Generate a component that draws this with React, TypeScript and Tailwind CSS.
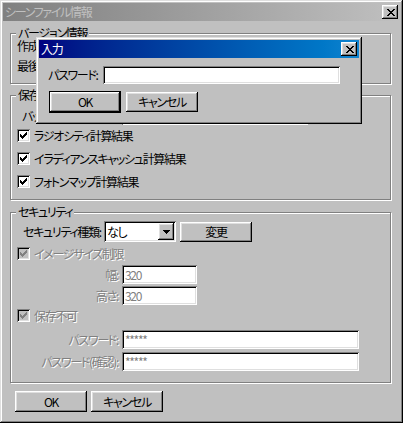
import React from "react";

const raised = "shadow-[inset_-1px_-1px_#000,inset_1px_1px_#fff,inset_-2px_-2px_#808080,inset_2px_2px_#dfdfdf]";
const sunken = "shadow-[inset_1px_1px_#808080,inset_-1px_-1px_#fff,inset_2px_2px_#000,inset_-2px_-2px_#dfdfdf]";
const frame = "shadow-[inset_-1px_-1px_#000,inset_1px_1px_#dfdfdf,inset_-2px_-2px_#808080,inset_2px_2px_#fff]";
const etched = "border border-[#808080] shadow-[inset_1px_1px_#fff,1px_1px_#fff]";
const grayed = "text-[#808080] [text-shadow:1px_1px_0_#fff]";

const CloseBtn = () => (
  <div className={`w-[16px] h-[14px] bg-[#c0c0c0] flex items-center justify-center pl-[1px] ${raised}`}>
    <svg width="8" height="7" viewBox="0 0 8 7" shapeRendering="crispEdges">
      <path
        d="M0 0h2v1H0zM6 0h2v1H6zM1 1h2v1H1zM5 1h2v1H5zM2 2h4v1H2zM3 3h2v1H3zM2 4h4v1H2zM1 5h2v1H1zM5 5h2v1H5zM0 6h2v1H0zM6 6h2v1H6z"
        fill="#000"
      />
    </svg>
  </div>
);

const Check = ({ label, disabled = false }: { label: string; disabled?: boolean }) => (
  <div className="flex items-center h-[13px] ml-[6px] gap-[4px]">
    <div className={`w-[13px] h-[13px] flex items-center justify-center ${sunken} ${disabled ? "bg-[#c0c0c0]" : "bg-white"}`}>
      <svg width="7" height="7" viewBox="0 0 7 7" shapeRendering="crispEdges">
        <path
          d="M6 0h1v1H6zM5 1h2v1H5zM0 2h1v1H0zM4 2h3v1H4zM0 3h2v1H0zM3 3h3v1H3zM0 4h5v1H0zM1 5h3v1H1zM2 6h1v1H2z"
          fill={disabled ? "#808080" : "#000"}
        />
      </svg>
    </div>
    <span className={`whitespace-nowrap ${disabled ? grayed : ""}`}>{label}</span>
  </div>
);

const Btn = ({ children, def = false, h = "h-[21px]" }: { children: React.ReactNode; def?: boolean; h?: string }) => (
  <div
    className={`w-[72px] ${h} bg-[#c0c0c0] flex items-center justify-center ${raised} ${def ? "border border-black" : ""}`}
  >
    {children}
  </div>
);

const Field = ({ label, w, value }: { label: string; w: string; value: string }) => (
  <div className="flex items-center h-[19px]">
    <span className={`w-[111px] pr-[4px] text-right whitespace-nowrap ${grayed}`}>{label}</span>
    <div className={`${w} h-[19px] bg-white flex items-center pl-[3px] text-[#808080] ${sunken}`}>{value}</div>
  </div>
);

export default function App() {
  return (
    <div
      className={`relative w-[403px] h-[423px] bg-[#c0c0c0] p-[3px] ${frame} font-['Noto_Sans_CJK_JP',sans-serif] text-[12px] leading-[12px] tracking-[-1.3px] text-black [font-feature-settings:'palt']`}
    >
      <div className="h-[18px] flex items-center justify-between pl-[2px] pr-[2px] bg-linear-to-r from-[#808080] to-[#c0c0c0]">
        <span className="text-[#c0c0c0]">シーンファイル情報</span>
        <CloseBtn />
      </div>

      {/* version info */}
      <fieldset className={`ml-[7px] mt-[6px] w-[381px] h-[57px] ${etched}`}>
        <legend className="ml-[5px] px-[2px] bg-[#c0c0c0] leading-[12px]">バージョン情報</legend>
        <div className="pl-[6px] pt-[1px] flex flex-col gap-[8px]">
          <div>作成バージョン: 4.2.0</div>
          <div>最後に保存したバージョン: 4.2.0</div>
        </div>
      </fieldset>

      {/* save */}
      <fieldset className={`ml-[7px] mt-[5px] w-[381px] h-[111px] ${etched}`}>
        <legend className="ml-[5px] px-[2px] bg-[#c0c0c0] leading-[12px]">保存内容</legend>
        <div className="mt-[5px] flex items-center h-[19px]">
          <span className="pl-[11px] w-[111px]">バックアップ:</span>
          <div className={`w-[186px] h-[19px] bg-white ${sunken}`} />
        </div>
        <div className="mt-[4px] flex flex-col gap-[10px]">
          <Check label="ラジオシティ計算結果" />
          <Check label="イラディアンスキャッシュ計算結果" />
          <Check label="フォトンマップ計算結果" />
        </div>
      </fieldset>

      {/* security */}
      <fieldset className={`ml-[7px] mt-[6px] w-[381px] h-[177px] ${etched}`}>
        <legend className="ml-[5px] px-[2px] bg-[#c0c0c0] leading-[12px]">セキュリティ</legend>
        <div className="mt-[3px] flex items-center">
          <span className="w-[93px] pl-[12px] whitespace-nowrap">セキュリティ種類:</span>
          <div className={`w-[72px] h-[21px] bg-white flex items-center pl-[3px] ${sunken}`}>
            <span>なし</span>
            <div className={`ml-auto mr-[2px] w-[16px] h-[17px] bg-[#c0c0c0] flex items-center justify-center ${raised}`}>
              <svg width="7" height="4" viewBox="0 0 7 4" shapeRendering="crispEdges">
                <path d="M0 0h7v1H0zM1 1h5v1H1zM2 2h3v1H2zM3 3h1v1H3z" fill="#000" />
              </svg>
            </div>
          </div>
          <div className="ml-[4px]">
            <Btn h="h-[20px]">変更</Btn>
          </div>
        </div>
        <div className="mt-[5px]">
          <Check label="イメージサイズ制限" disabled />
        </div>
        <div className="mt-[5px]">
          <Field label="幅:" w="w-[75px]" value="320" />
        </div>
        <div className="mt-[2px]">
          <Field label="高さ:" w="w-[75px]" value="320" />
        </div>
        <div className="mt-[4px]">
          <Check label="保存不可" disabled />
        </div>
        <div className="mt-[8px]">
          <Field label="パスワード:" w="w-[237px]" value="*****" />
        </div>
        <div className="mt-[3px]">
          <Field label="パスワード(確認):" w="w-[237px]" value="*****" />
        </div>
      </fieldset>

      <div className="mt-[8px] ml-[12px] flex gap-[4px]">
        <Btn>OK</Btn>
        <Btn>キャンセル</Btn>
      </div>

      {/* password prompt */}
      <div className={`absolute left-[36px] top-[37px] w-[326px] h-[87px] bg-[#c0c0c0] p-[3px] ${frame}`}>
        <div className="h-[18px] flex items-center justify-between pl-[2px] pr-[2px] bg-linear-to-r from-[#000080] to-[#1084d0]">
          <span className="text-white">入力</span>
          <CloseBtn />
        </div>
        <div className="mt-[8px] flex items-center h-[18px]">
          <span className="pl-[9px] w-[64px] whitespace-nowrap">パスワード:</span>
          <div className={`w-[237px] h-[18px] bg-white ${sunken}`} />
        </div>
        <div className="mt-[7px] flex items-center pl-[10px] gap-[5px]">
          <Btn def h="h-[22px]">OK</Btn>
          <Btn h="h-[20px]">キャンセル</Btn>
        </div>
      </div>
    </div>
  );
}
